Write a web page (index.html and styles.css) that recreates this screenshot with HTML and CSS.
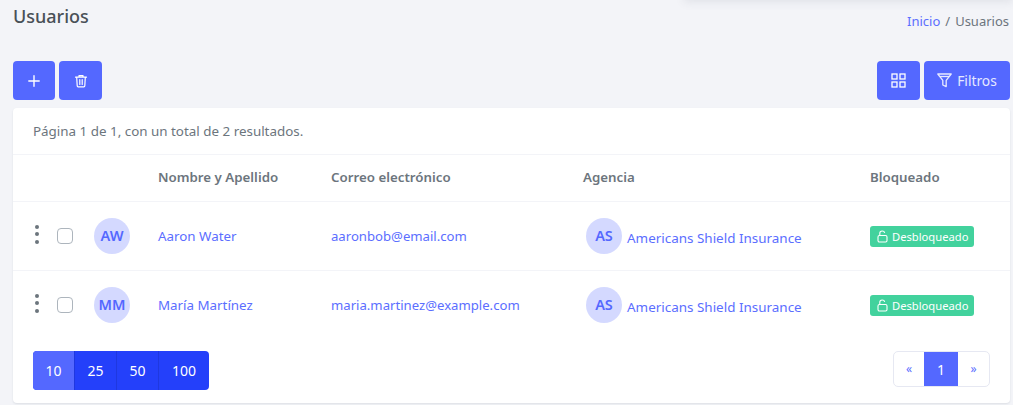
FILE: index.html
```html
<!DOCTYPE html>
<html lang="es">
<head>
<meta charset="utf-8">
<title>Usuarios</title>
<link rel="stylesheet" href="styles.css">
</head>
<body>
<div class="top-shadow"></div>
<main class="page">
  <header class="page-head">
    <h1>Usuarios</h1>
    <nav class="crumbs"><a href="#">Inicio</a><span class="sep">/</span><span>Usuarios</span></nav>
  </header>
  <div class="toolbar">
    <div class="group">
      <button class="btn btn-icon btn-add" aria-label="Nuevo">
        <svg width="12" height="12" viewBox="0 0 12 12" fill="none" stroke="currentColor" stroke-width="1.4" stroke-linecap="round"><path d="M6 .8v10.4M.8 6h10.4"/></svg>
      </button>
      <button class="btn btn-icon" aria-label="Eliminar">
        <svg width="14" height="14" viewBox="0 0 14 14" fill="none" stroke="currentColor" stroke-width="1.2" stroke-linecap="round" stroke-linejoin="round"><path d="M1.5 3.2h11M5 3V1.6h4V3M2.7 3.2l.5 8.6c0 .6.5 1 1 1h5.6c.5 0 1-.4 1-1l.5-8.6M5.8 5.6v4.8M8.2 5.6v4.8"/></svg>
      </button>
    </div>
    <div class="group">
      <button class="btn btn-icon" aria-label="Vista">
        <svg width="15" height="15" viewBox="0 0 15 15" fill="none" stroke="currentColor" stroke-width="1.3"><rect x="1" y="1" width="5" height="5"/><rect x="9" y="1" width="5" height="5"/><rect x="1" y="9" width="5" height="5"/><rect x="9" y="9" width="5" height="5"/></svg>
      </button>
      <button class="btn btn-text">
        <svg width="15" height="15" viewBox="0 0 15 15" fill="none" stroke="currentColor" stroke-width="1.3" stroke-linejoin="round"><path d="M.8 1h13.4L9.2 7.4v6.2L5.8 12V7.4z"/><path d="M2.8 3.5h9.4"/></svg>
        Filtros
      </button>
    </div>
  </div>
  <section class="card">
    <p class="summary">Página 1 de 1, con un total de 2 resultados.</p>
    <table class="users">
      <thead>
        <tr>
          <th class="c-tools"></th>
          <th class="c-name">Nombre y Apellido</th>
          <th class="c-mail">Correo electrónico</th>
          <th class="c-agency">Agencia</th>
          <th class="c-state">Bloqueado</th>
        </tr>
      </thead>
      <tbody>
        <tr>
          <td class="c-tools">
            <div class="tools">
              <span class="dots"><i></i><i></i><i></i></span>
              <span class="check"></span>
              <span class="avatar">AW</span>
            </div>
          </td>
          <td class="cell-name"><a href="#">Aaron Water</a></td>
          <td><a href="#">aaronbob@email.com</a></td>
          <td><div class="agency"><span class="avatar">AS</span><a class="agency-name" href="#">Americans Shield Insurance</a></div></td>
          <td><span class="badge">
            <svg width="11" height="13" viewBox="0 0 11 13" fill="none" stroke="currentColor" stroke-width="1.1"><rect x="1" y="5.5" width="9" height="6.5" rx="1.4"/><path d="M2.8 5.5V3.3C2.8 1.9 3.9 1 5.2 1c1.2 0 2.2.7 2.5 1.9"/></svg>
            Desbloqueado</span></td>
        </tr>
        <tr>
          <td class="c-tools">
            <div class="tools">
              <span class="dots"><i></i><i></i><i></i></span>
              <span class="check"></span>
              <span class="avatar">MM</span>
            </div>
          </td>
          <td class="cell-name"><a href="#">María Martínez</a></td>
          <td><a href="#">maria.martinez@example.com</a></td>
          <td><div class="agency"><span class="avatar">AS</span><a class="agency-name" href="#">Americans Shield Insurance</a></div></td>
          <td><span class="badge">
            <svg width="11" height="13" viewBox="0 0 11 13" fill="none" stroke="currentColor" stroke-width="1.1"><rect x="1" y="5.5" width="9" height="6.5" rx="1.4"/><path d="M2.8 5.5V3.3C2.8 1.9 3.9 1 5.2 1c1.2 0 2.2.7 2.5 1.9"/></svg>
            Desbloqueado</span></td>
        </tr>
      </tbody>
    </table>
    <footer class="card-foot">
      <div class="sizes">
        <button class="size active">10</button><button class="size">25</button><button class="size">50</button><button class="size wide">100</button>
      </div>
      <div class="pager">
        <a class="pg" href="#">«</a><a class="pg current" href="#">1</a><a class="pg last" href="#">»</a>
      </div>
    </footer>
  </section>
</main>
</body>
</html>
```
FILE: styles.css
```css
* { box-sizing: border-box; }
html, body { margin: 0; height: 405px; overflow: hidden; }
body {
  background: #f3f4f8;
  color: #6c757d;
  font-family: "Noto Sans", "Open Sans", sans-serif;
  font-size: 13px;
  position: relative;
}
a { color: #5b6eff; text-decoration: none; }
.top-shadow {
  position: absolute;
  top: -12px;
  left: 684px;
  right: 0;
  height: 12px;
  box-shadow: 0 2px 10px rgba(60, 70, 90, .10);
}
.page { padding: 0 3px 0 13px; }
.page-head { display: flex; justify-content: space-between; height: 61px; }
h1 {
  margin: 4px 0 0;
  font-size: 18px;
  line-height: 25px;
  font-weight: 500;
  color: #495057;
}
.crumbs { margin-top: 12px; line-height: 18px; font-size: 13px; margin-right: 1px; }
.sep { margin: 0 5px; }
.toolbar { display: flex; justify-content: space-between; height: 39px; margin-bottom: 8px; }
.group { display: flex; gap: 4px; }
.btn {
  height: 39px;
  border: 0;
  border-radius: 4px;
  background: #5468ff;
  color: #fff;
  font: inherit;
  font-size: 13.8px;
  display: flex;
  align-items: center;
  justify-content: center;
  padding: 0;
}
.btn-icon { width: 43px; }
.btn-add { width: 42px; }
.btn-text { width: 86px; gap: 5px; color: #e6e9ff; }
.card {
  background: #fff;
  border-radius: 4px;
  height: 295px;
  box-shadow: 0 1px 2px rgba(60, 70, 90, .12);
  padding-top: 1px;
}
.summary {
  margin: 0;
  height: 46px;
  padding: 13px 20px 0;
  line-height: 18px;
  font-size: 13.4px;
  border-bottom: 1px solid #f3f4f8;
}
.users { width: 100%; border-collapse: collapse; table-layout: fixed; }
.users th {
  height: 46px;
  text-align: left;
  font-weight: 600;
  font-size: 13.3px;
  color: #6c757d;
  padding: 0 0 2px;
  border-bottom: 1px solid #f3f4f8;
}
.users td { height: 69px; padding: 0; font-size: 13.15px; }
.users td.cell-name { font-size: 13.35px; }
.users tbody tr:first-child td { border-bottom: 1px solid #f3f4f8; }
.c-tools { width: 145px; }
.c-name { width: 173px; }
.c-mail { width: 252px; }
.c-agency { width: 287px; }
.tools { display: flex; align-items: center; padding-left: 20px; }
.dots { width: 7px; display: flex; flex-direction: column; gap: 3.5px; align-items: center; margin-top: -3px; }
.dots i { width: 4px; height: 4px; border-radius: 50%; background: #6c757d; }
.check {
  width: 16px; height: 16px;
  margin-left: 17px;
  border: 1px solid #adb5bd;
  border-radius: 4px;
  background: #fff;
}
.avatar {
  width: 36px; height: 36px;
  border-radius: 50%;
  background: #d4d9ff;
  color: #5468ff;
  font-weight: 600;
  font-size: 14.5px;
  display: flex;
  align-items: center;
  justify-content: center;
  flex: none;
  padding-bottom: 2px;
}
.tools .avatar { margin-left: 21px; }
.agency { display: flex; align-items: center; padding-left: 3px; }
.agency-name { margin-left: 5px; margin-top: 4px; font-size: 13.45px; white-space: nowrap; }
.badge {
  display: inline-flex;
  align-items: center;
  gap: 4px;
  height: 21px;
  width: 104px;
  padding-left: 7px;
  border-radius: 3px;
  background: #42d29d;
  color: #fff;
  font-size: 11.2px;
  vertical-align: middle;
  margin-top: 1px;
}
.card-foot { display: flex; justify-content: space-between; padding: 12px 20px 0; }
.sizes { display: flex; height: 39px; border-radius: 4px; overflow: hidden; background: #2440fa; }
.size {
  width: 42px;
  border: 0;
  border-left: 1px solid #1f38e0;
  background: transparent;
  color: #fff;
  font: inherit;
  font-size: 14px;
  padding: 0;
}
.size.active { width: 41px; background: #5468ff; border-left: 0; }
.size.wide { width: 51px; }
.pager {
  display: flex;
  height: 36px;
  border: 1px solid #e6e8f2;
  border-radius: 5px;
  overflow: hidden;
}
.pg {
  width: 30px;
  display: flex;
  align-items: center;
  justify-content: center;
  font-size: 12px;
  padding-bottom: 2px;
}
.pg.last { width: 31px; }
.pg.current { width: 34px; background: #5468ff; color: #fff; font-size: 14px; padding: 0; }
```
